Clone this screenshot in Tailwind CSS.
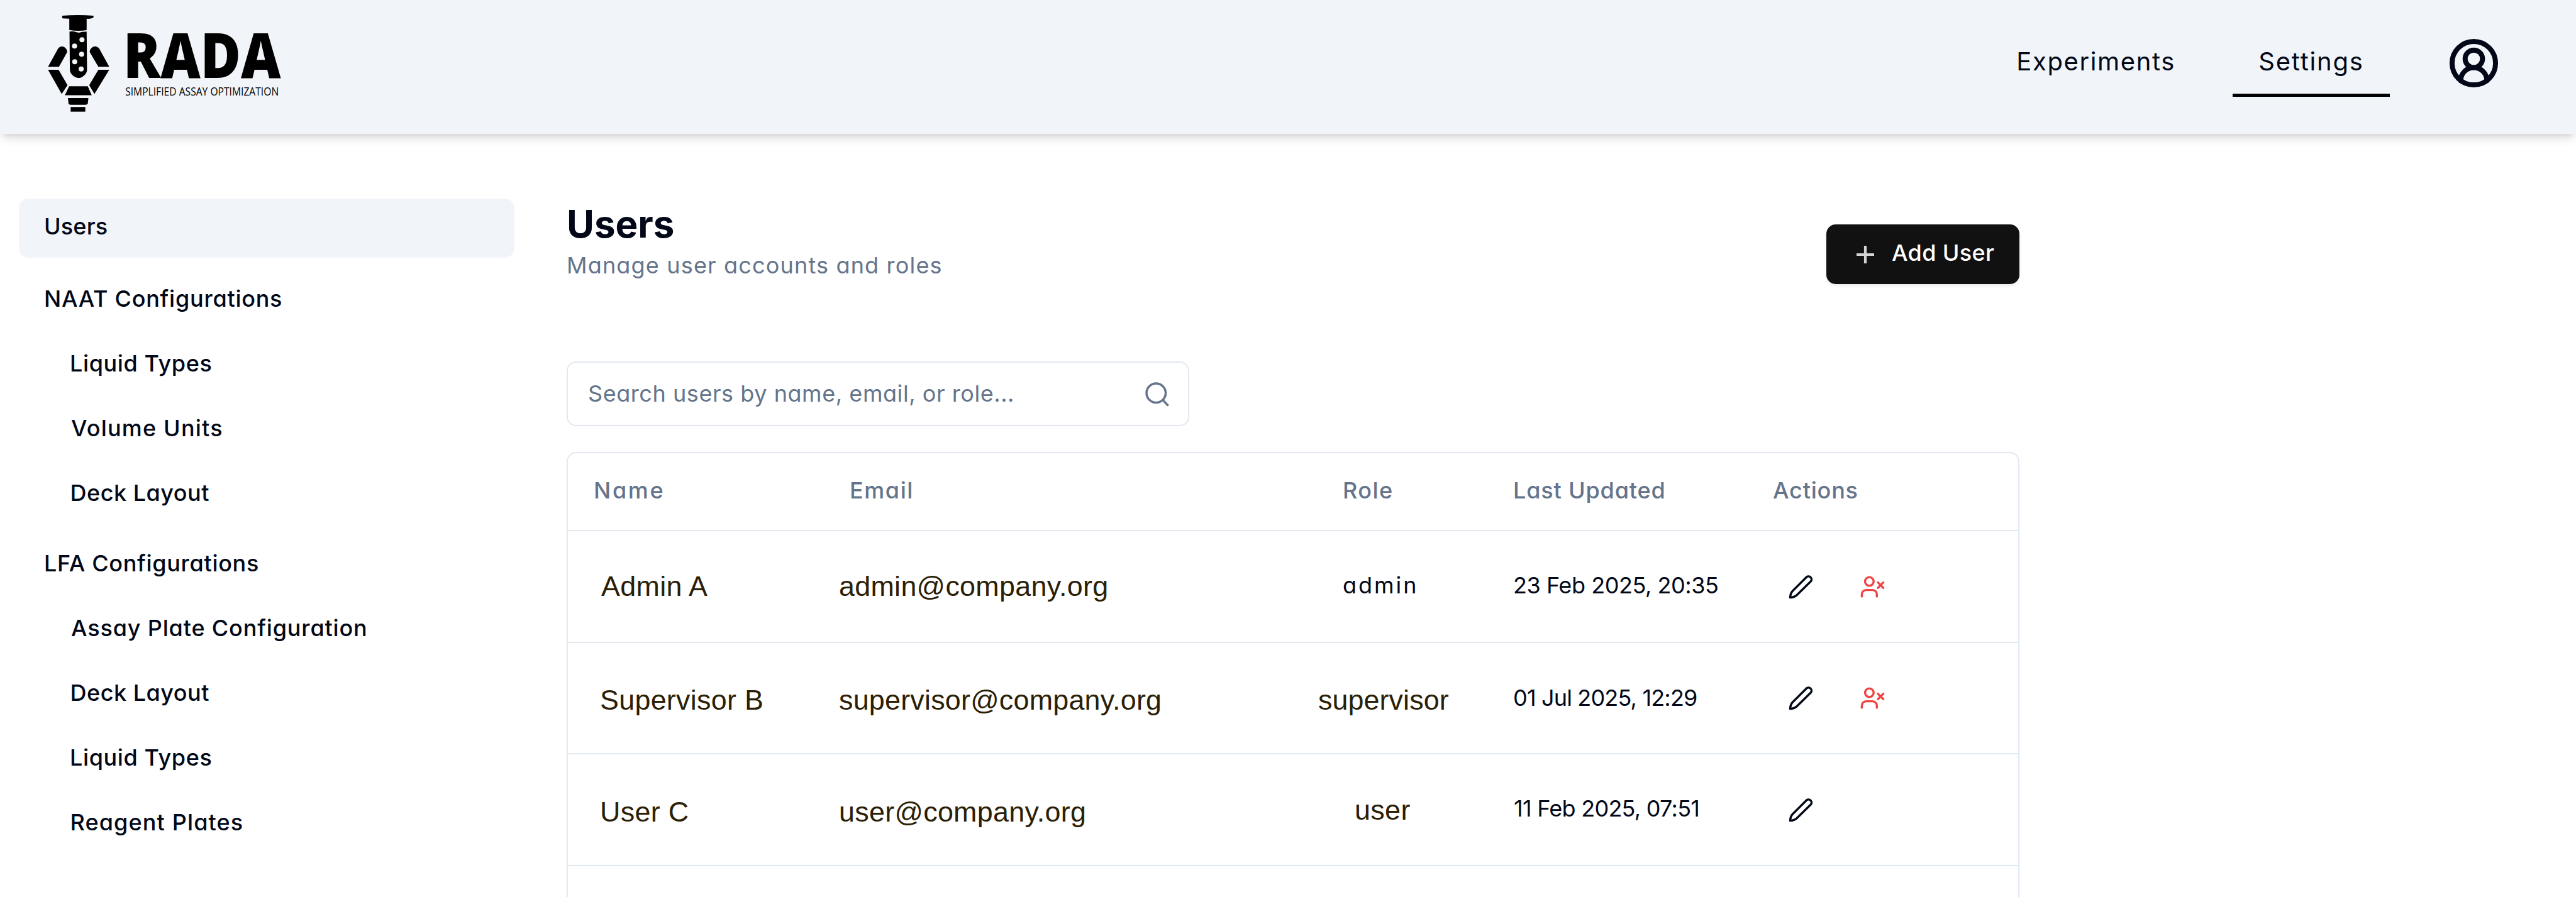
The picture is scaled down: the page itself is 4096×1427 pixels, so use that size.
<!DOCTYPE html>
<html lang="en">
<head>
<meta charset="utf-8">
<title>RADA – Users</title>
<script src="https://cdn.jsdelivr.net/npm/@tailwindcss/browser@4"></script>
</head>
<body class="h-[1427px] w-[4096px] overflow-hidden bg-white font-['Inter',sans-serif] text-[36px] text-[#020817] [font-feature-settings:'cv11']">

<svg class="hidden">
  <symbol id="pen" viewBox="0 0 24 24"><path d="M17.3 2.9a2.85 2.85 0 0 1 4 4L8.2 19.7C6.7 21.1 4.6 21.8 2 22c.2-2.6.9-4.7 2.4-6.2z"/></symbol>
  <symbol id="user-x" viewBox="0 0 24 24"><path d="M16 21v-2a4 4 0 0 0-4-4H6a4 4 0 0 0-4 4v2"/><circle cx="9" cy="7" r="4"/><path d="m17 8 5 5M22 8l-5 5"/></symbol>
</svg>

<header class="flex h-[213px] items-start justify-between bg-[#f1f5f9] shadow-[0_10px_15px_-3px_rgba(0,0,0,0.12),0_5px_10px_-5px_rgba(0,0,0,0.12)]">
  <svg class="h-[213px] w-[456px] overflow-visible" viewBox="-210 -30 1470 687" fill="#000">
    <path d="M108 51Q190 44 270 51L268 61Q252 68 234 66V125Q190 132 145 124V66L110 64Z"/>
    <path d="M146 132Q165 128 176 134Q195 141 210 134L234 132L236 330Q234 355 205 368Q190 373 178 367Q150 354 148 330Z"/>
    <g fill="#f1f5f9"><circle cx="210" cy="174" r="13"/><circle cx="172" cy="206" r="13"/><circle cx="208" cy="248" r="13"/><circle cx="173" cy="287" r="13"/><circle cx="206" cy="324" r="13"/></g>
    <path d="M36 313H92L134 238Q136 226 123 214Q107 202 92 214L87 220Z"/>
    <path d="M350 313H294L250 238Q248 226 261 214Q277 202 294 214L299 220Z"/>
    <path d="M36 328H90L136 407L106 452Z"/>
    <path d="M350 328H294L247 407L274 452Z"/>
    <path d="M144 413H240L260 459H122Z"/>
    <path d="M138 473H243L240 500Q238 508 229 508H152Q142 508 141 500Z"/>
    <path d="M152 519H227V543H152Z"/>
    <text class="font-['Open_Sans',sans-serif] font-extrabold" x="422" y="371" font-size="318" textLength="808" lengthAdjust="spacingAndGlyphs">RADA</text>
    <text class="font-['Open_Sans',sans-serif] font-medium" x="432" y="459" font-size="60" textLength="787" lengthAdjust="spacingAndGlyphs">SIMPLIFIED ASSAY OPTIMIZATION</text>
  </svg>
  <nav class="mr-[121px] flex items-start text-[40px] leading-[113px]">
    <a class="h-[154px] pt-[41px] pr-[91px] tracking-[1.62px]">Experiments</a>
    <a class="h-[154px] w-[250px] border-b-[5px] border-black pt-[41px] text-center tracking-[1.77px]">Settings</a>
    <svg class="mt-[59px] ml-[92px] size-[83px]" viewBox="0 0 24 24" fill="none" stroke="currentColor" stroke-width="2.3" stroke-linecap="round" stroke-linejoin="round"><path d="M18 20a6 6 0 0 0-12 0"/><circle cx="12" cy="10" r="4"/><circle cx="12" cy="12" r="10"/></svg>
  </nav>
</header>

<div class="flex pt-[103px]">
  <aside class="ml-[30px] flex w-[788px] flex-col gap-[9px] font-medium leading-[88px]">
    <a class="mb-[12px] h-[94px] rounded-[15px] bg-[#f1f5f9] pl-[40px] tracking-[0.15px]">Users</a>
    <a class="h-[94px] pl-[40px] tracking-[0.75px]">NAAT Configurations</a>
    <a class="h-[94px] pl-[81px] tracking-[0.62px]">Liquid Types</a>
    <a class="h-[94px] pl-[83px] tracking-[1.19px]">Volume Units</a>
    <a class="mb-[9px] h-[94px] pl-[81.5px] tracking-[0.51px]">Deck Layout</a>
    <a class="h-[94px] pl-[40px] tracking-[0.69px]">LFA Configurations</a>
    <a class="h-[94px] pl-[83px] tracking-[0.84px]">Assay Plate Configuration</a>
    <a class="h-[94px] pl-[81.5px] tracking-[0.51px]">Deck Layout</a>
    <a class="h-[94px] pl-[81px] tracking-[0.62px]">Liquid Types</a>
    <a class="h-[94px] pl-[81.5px] tracking-[1.13px]">Reagent Plates</a>
  </aside>

  <main class="ml-[83px] w-[2310px]">
    <div class="flex h-[259px] items-start justify-between">
      <div>
        <h1 class="text-[60px] font-bold leading-[80px]">Users</h1>
        <p class="leading-[52px] tracking-[1.17px] text-[#64748b]">Manage user accounts and roles</p>
      </div>
      <button class="mt-[41px] flex h-[95px] w-[307px] items-center rounded-[15px] bg-[#111] font-medium text-white shadow-[0_3px_5px_rgba(0,0,0,0.08)]">
        <svg class="ml-[41px] size-[42px]" viewBox="0 0 24 24" fill="none" stroke="#d4d4d4" stroke-width="2.4"><path d="M4 12h16M12 4v16"/></svg>
        <span class="ml-[21px] pb-[6px] tracking-[0.34px]">Add User</span>
      </button>
    </div>
    <div class="flex h-[103px] w-[990px] items-center justify-between rounded-[15px] border-2 border-[#e2e8f0] pr-[28px] pl-[32px] text-[#64748b]">
      <span class="pb-[2px] tracking-[0.56px]">Search users by name, email, or role...</span>
      <svg class="size-[42px]" viewBox="0 0 24 24" fill="none" stroke="currentColor" stroke-width="2" stroke-linecap="round"><circle cx="11" cy="11" r="8.7"/><path d="m21.5 22-4.2-4.5"/></svg>
    </div>

    <div class="mt-[41px] h-[760px] rounded-[15px] border-2 border-[#e2e8f0]">
      <div class="grid h-[124px] grid-cols-[430px_761px_314px_411px_1fr] items-center border-b-2 border-[#e2e8f0] pb-[5px] font-medium text-[#64748b]">
        <div class="pl-[41px] tracking-[2.68px]">Name</div>
        <div class="pl-[18px] tracking-[1.57px]">Email</div>
        <div class="pl-[41px] tracking-[1.42px]">Role</div>
        <div class="-ml-[2px] tracking-[0.83px]">Last Updated</div>
        <div class="tracking-[0.81px]">Actions</div>
      </div>
      <div class="grid h-[178px] grid-cols-[430px_761px_314px_411px_1fr] items-center border-b-2 border-[#e2e8f0]">
        <div class="pl-[53px] font-['Liberation_Sans',sans-serif] text-[44.8px] tracking-[0.35px] text-[#2b2006]">Admin A</div>
        <div class="pl-[1px] font-['Liberation_Sans',sans-serif] text-[44.8px] tracking-[0.32px] text-[#2b2006]">admin@company.org</div>
        <div class="pb-[4px] pl-[41px] tracking-[3px]">admin</div>
        <div class="-ml-[2px] pb-[4px] tracking-[-0.45px]">23 Feb 2025, 20:35</div>
        <div class="flex gap-[73px] pl-[24px]">
          <svg class="size-[41px]" fill="none" stroke="currentColor" stroke-width="2" stroke-linejoin="round"><use href="#pen"/></svg>
          <svg class="size-[41px] text-[#ef4444]" fill="none" stroke="currentColor" stroke-width="2" stroke-linecap="round" stroke-linejoin="round"><use href="#user-x"/></svg>
        </div>
      </div>
      <div class="grid h-[177px] grid-cols-[430px_761px_314px_411px_1fr] items-center border-b-2 border-[#e2e8f0]">
        <div class="pt-[6px] pl-[51px] font-['Liberation_Sans',sans-serif] text-[44.8px] tracking-[0.31px] text-[#2b2006]">Supervisor B</div>
        <div class="pt-[6px] pl-[1px] font-['Liberation_Sans',sans-serif] text-[44.8px] tracking-[0.25px] text-[#2b2006]">supervisor@company.org</div>
        <div class="pt-[6px] pl-[2px] font-['Liberation_Sans',sans-serif] text-[44.8px] tracking-[0.11px] text-[#2b2006]">supervisor</div>
        <div class="-ml-[2px] pb-[2px] tracking-[-0.83px]">01 Jul 2025, 12:29</div>
        <div class="flex gap-[73px] pl-[24px]">
          <svg class="size-[41px]" fill="none" stroke="currentColor" stroke-width="2" stroke-linejoin="round"><use href="#pen"/></svg>
          <svg class="size-[41px] text-[#ef4444]" fill="none" stroke="currentColor" stroke-width="2" stroke-linecap="round" stroke-linejoin="round"><use href="#user-x"/></svg>
        </div>
      </div>
      <div class="grid h-[178px] grid-cols-[430px_761px_314px_411px_1fr] items-center border-b-2 border-[#e2e8f0]">
        <div class="pt-[7px] pl-[51px] font-['Liberation_Sans',sans-serif] text-[44.8px] tracking-[0.35px] text-[#2b2006]">User C</div>
        <div class="pt-[7px] pl-[1px] font-['Liberation_Sans',sans-serif] text-[44.8px] tracking-[0.31px] text-[#2b2006]">user@company.org</div>
        <div class="pt-[2px] pl-[60px] font-['Liberation_Sans',sans-serif] text-[44.8px] tracking-[0.4px] text-[#2b2006]">user</div>
        <div class="-ml-[1px] pb-[5px] tracking-[-0.74px]">11 Feb 2025, 07:51</div>
        <div class="flex pl-[24px]">
          <svg class="size-[41px]" fill="none" stroke="currentColor" stroke-width="2" stroke-linejoin="round"><use href="#pen"/></svg>
        </div>
      </div>
    </div>
  </main>
</div>
</body>
</html>
